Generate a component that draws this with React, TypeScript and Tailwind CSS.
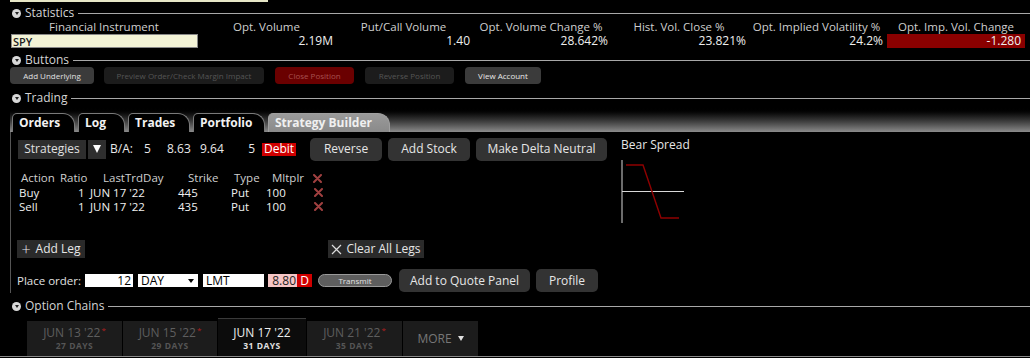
import React from "react";

const Circle = () => (
  <span className="w-[9px] h-[9px] rounded-full bg-[#d8d8d8] flex items-center justify-center shrink-0">
    <span className="w-0 h-0 border-l-[2.5px] border-r-[2.5px] border-t-[3px] border-l-transparent border-r-transparent border-t-[#222] mt-[1px]" />
  </span>
);

const Sec = ({ title, className }: { title: string; className?: string }) => (
  <div className={"flex items-center pl-[12px] " + (className || "")}>
    <Circle />
    <span className="ml-[4px] text-[12px] text-[#d4d4d4] leading-none">{title}</span>
    <div className="flex-1 h-px bg-[#a8a8a8] ml-[4px]" />
  </div>
);

const XMark = () => (
  <svg width="9" height="9" viewBox="0 0 9 9" className="block">
    <path d="M1 1 L8 8 M8 1 L1 8" stroke="#a04040" strokeWidth="2" strokeLinecap="round" />
  </svg>
);

const Btn = ({ children, className }: { children: React.ReactNode; className: string }) => (
  <div className={"flex items-center justify-center rounded-[4px] text-[8px] leading-none " + className}>{children}</div>
);

const GBtn = ({ children, className }: { children: React.ReactNode; className: string }) => (
  <div className={"flex items-center justify-center rounded-[5px] bg-[#333] text-[12px] text-[#e6e6e6] leading-none " + className}>{children}</div>
);

const statCols = [
  { h: "Opt. Volume", v: "2.19M", w: "w-[137px]" },
  { h: "Put/Call Volume", v: "1.40", w: "w-[137px]" },
  { h: "Opt. Volume Change %", v: "28.642%", w: "w-[138px]" },
  { h: "Hist. Vol. Close %", v: "23.821%", w: "w-[138px]" },
  { h: "Opt. Implied Volatility %", v: "24.2%", w: "w-[137px]" },
];

const Tab = ({ label, w, active }: { label: string; w: string; active?: boolean }) => (
  <div
    className={
      "h-[19px] flex items-center pl-[6px] text-[12px] font-bold leading-none rounded-tl-[5px] rounded-tr-[12px] border border-b-0 " +
      w +
      (active
        ? " bg-gradient-to-b from-[#9a9a9a] to-[#8a8a8a] text-[#f0f0f0] border-[#a0a0a0]"
        : " bg-black text-[#f2f2f2] border-[#7a7a7a]")
    }
  >
    {label}
  </div>
);

const Exp = ({ d, days, w, active }: { d: string; days: string; w: string; active?: boolean }) => (
  <div
    className={
      "flex flex-col items-center " +
      w +
      (active ? " h-[38px] bg-[#0c0c0c] border-t border-[#3a3a3a] pt-[7px]" : " h-[35px] bg-[#1c1c1c] pt-[5px]")
    }
  >
    <div className={"text-[12px] leading-[14px] flex " + (active ? "text-[#eeeeee]" : "text-[#5e5e5e]")}>
      <span>{d}</span>
      {!active && <span className="text-[#b02020] text-[8px] leading-[8px] ml-[1px]">*</span>}
    </div>
    <div className={"text-[8.5px] font-bold tracking-[0.5px] leading-[12px] " + (active ? "text-[#e0e0e0]" : "text-[#555]")}>
      {days}
    </div>
  </div>
);

export default function App() {
  return (
    <div className="w-[1030px] h-[358px] bg-black overflow-hidden font-['Open_Sans',sans-serif] text-[#e8e8e8] relative">
      {/* top strip */}
      <div className="ml-[10px] w-[258px] h-[2px] bg-[#e6e6c6]" />
      <Sec title="Statistics" className="h-[16px] mt-[3px]" />
      {/* stats headers */}
      <div className="flex pl-[10px] h-[12px] items-center text-[11.5px] text-[#cfcfcf] leading-none">
        <div className="w-[188px] text-center">Financial Instrument</div>
        {statCols.map((c) => (
          <div key={c.h} className={c.w + " text-center"}>{c.h}</div>
        ))}
        <div className="w-[138px] ml-[2px] text-center">Opt. Imp. Vol. Change</div>
      </div>
      <div className="flex pl-[11px] h-[14px] mt-[1px] text-[12px] leading-none">
        <div className="w-[187px] bg-[#f3f3d6] border border-[#888] text-[#222] flex items-center pl-[1px] text-[11px] font-semibold">SPY</div>
        {statCols.map((c) => (
          <div key={c.h} className={c.w + " text-right pr-[2px] flex items-center justify-end text-[#eeeeee]"}>{c.v}</div>
        ))}
        <div className="w-[138px] ml-[2px] bg-[#8a0000] flex items-center justify-end pr-[4px] text-[#f0f0f0]">-1.280</div>
      </div>
      <Sec title="Buttons" className="h-[14px] mt-[5px]" />
      <div className="flex h-[17px] pl-[10px]">
        <Btn className="w-[84px] bg-[#3b3b3b] text-[#e0e0e0]">Add Underlying</Btn>
        <Btn className="w-[160px] ml-[10px] bg-[#1c1c1c] text-[#555]">Preview Order/Check Margin Impact</Btn>
        <Btn className="w-[79px] ml-[11px] bg-[#6a0000] text-[#a85050]">Close Position</Btn>
        <Btn className="w-[89px] ml-[11px] bg-[#1c1c1c] text-[#555]">Reverse Position</Btn>
        <Btn className="w-[76px] ml-[11px] bg-[#3b3b3b] text-[#e8e8e8]">View Account</Btn>
      </div>
      <Sec title="Trading" className="h-[10px] mt-[9px]" />
      {/* tab bar */}
      <div className="ml-[10px] h-[29px] bg-gradient-to-b from-black from-15% to-[#8c8c8c] flex items-end pl-[2px] gap-[3px]">
        <Tab label="Orders" w="w-[63px]" />
        <Tab label="Log" w="w-[47px]" />
        <Tab label="Trades" w="w-[62px]" />
        <Tab label="Portfolio" w="w-[72px]" />
        <Tab label="Strategy Builder" w="w-[122px]" active />
      </div>
      {/* content */}
      <div className="ml-[10px] h-[161px] border-l border-[#555] flex">
        <div className="w-[610px] flex flex-col">
          {/* row 1 */}
          <div className="flex items-center h-[24px] mt-[5px] text-[12px] leading-none">
            <div className="ml-[7px] w-[68px] h-[19px] bg-[#2e2e2e] flex items-center justify-center text-[#e0e0e0]">Strategies</div>
            <div className="ml-[2px] w-[18px] h-[19px] bg-[#2e2e2e] flex items-center justify-center">
              <span className="w-0 h-0 border-l-[4px] border-r-[4px] border-t-[8px] border-l-transparent border-r-transparent border-t-white" />
            </div>
            <span className="ml-[4px] w-[34px]">B/A:</span>
            <span className="w-[23px]">5</span>
            <span className="w-[33px]">8.63</span>
            <span className="w-[24px]">9.64</span>
            <span className="w-[31px] text-right">5</span>
            <div className="ml-[7px] w-[34px] h-[13px] bg-[#d00000] flex items-center justify-center text-white">Debit</div>
            <GBtn className="ml-[14px] w-[72px] h-[23px]">Reverse</GBtn>
            <GBtn className="ml-[6px] w-[82px] h-[23px]">Add Stock</GBtn>
            <GBtn className="ml-[6px] w-[131px] h-[23px]">Make Delta Neutral</GBtn>
          </div>
          {/* legs table */}
          <div className="mt-[10px] text-[11.5px] leading-none">
            <div className="flex items-center h-[14px] text-[#cfcfcf]">
              <span className="ml-[10px] w-[39px]">Action</span>
              <span className="w-[43px]">Ratio</span>
              <span className="w-[85px]">LastTrdDay</span>
              <span className="w-[46px]">Strike</span>
              <span className="w-[38px]">Type</span>
              <span className="w-[41px]">Mltplr</span>
              <XMark />
            </div>
            {["Buy", "Sell"].map((a, i) => (
              <div key={a} className="flex items-center h-[14.5px] text-[#f0f0f0]">
                <span className="ml-[8px] w-[59px]">{a}</span>
                <span className="w-[12px]">1</span>
                <span className="w-[88px]">JUN 17 '22</span>
                <span className="w-[53px]">{i === 0 ? "445" : "435"}</span>
                <span className="w-[35px]">Put</span>
                <span className="w-[48px]">100</span>
                <XMark />
              </div>
            ))}
          </div>
          {/* add leg row */}
          <div className="flex h-[18px] mt-[26px] text-[12px] leading-none">
            <div className="ml-[6px] w-[68px] bg-[#2a2a2a] flex items-center justify-center gap-[5px] text-[#e6e6e6]">
              <span className="text-[16px] leading-none font-light">+</span>
              <span>Add Leg</span>
            </div>
            <div className="ml-[243px] w-[96px] bg-[#2a2a2a] flex items-center justify-center gap-[4px] text-[#e6e6e6]">
              <svg width="11" height="11" viewBox="0 0 11 11"><path d="M1 1 L10 10 M10 1 L1 10" stroke="#ddd" strokeWidth="1.2" /></svg>
              <span>Clear All Legs</span>
            </div>
          </div>
          {/* place order */}
          <div className="flex items-center h-[23px] mt-[11px] text-[12px] leading-none">
            <span className="ml-[6px] w-[68px] text-[11.5px] text-[#e0e0e0]">Place order:</span>
            <div className="w-[48px] h-[13px] bg-white text-black flex items-center justify-end pr-[2px]">12</div>
            <div className="ml-[5px] w-[60px] h-[13px] bg-white text-black flex items-center pl-[3px] justify-between pr-[4px]">
              <span>DAY</span>
              <span className="w-0 h-0 border-l-[3px] border-r-[3px] border-t-[4px] border-l-transparent border-r-transparent border-t-black" />
            </div>
            <div className="ml-[5px] w-[61px] h-[13px] bg-white text-black flex items-center pl-[3px]">LMT</div>
            <div className="ml-[4px] w-[29px] h-[13px] bg-[#f6c6c6] text-[#222] flex items-center justify-end pr-[1px]">8.80</div>
            <div className="w-[15px] h-[13px] bg-[#d00000] text-white flex items-center justify-center">D</div>
            <div className="ml-[6px] w-[74px] h-[13px] rounded-full bg-[#5e5e5e] border border-[#9a9a9a] flex items-center justify-center text-[8px] text-[#e0e0e0]">Transmit</div>
            <GBtn className="ml-[7px] w-[131px] h-[23px]">Add to Quote Panel</GBtn>
            <GBtn className="ml-[6px] w-[62px] h-[23px]">Profile</GBtn>
          </div>
        </div>
        {/* chart */}
        <div className="flex flex-col">
          <div className="mt-[6px] h-[14px] text-[12px] leading-none text-[#e6e6e6] flex items-center">Bear Spread</div>
          <svg width="70" height="66" viewBox="0 0 70 66" className="mt-[7px] -ml-[1px] block">
            <line x1="2" y1="1" x2="2" y2="64" stroke="#d8d8d8" strokeWidth="1" />
            <line x1="2" y1="32.5" x2="64" y2="32.5" stroke="#d8d8d8" strokeWidth="1" />
            <polyline points="6,6 23,6 41,59 59,59" fill="none" stroke="#8f0000" strokeWidth="1.4" />
          </svg>
        </div>
      </div>
      <Sec title="Option Chains" className="h-[14px] mt-[6px]" />
      <div className="flex items-end h-[38px] mt-[5px] pl-[27px] gap-[1px]">
        <Exp d="JUN 13 '22" days="27 DAYS" w="w-[95px]" />
        <Exp d="JUN 15 '22" days="29 DAYS" w="w-[94px]" />
        <Exp d="JUN 17 '22" days="31 DAYS" w="w-[88px]" active />
        <Exp d="JUN 21 '22" days="35 DAYS" w="w-[95px]" />
        <div className="w-[75px] h-[35px] bg-[#1c1c1c] flex items-center justify-center gap-[6px] text-[12px] text-[#777]">
          <span>MORE</span>
          <span className="w-0 h-0 border-l-[3.5px] border-r-[3.5px] border-t-[5px] border-l-transparent border-r-transparent border-t-[#e0e0e0]" />
        </div>
      </div>
      <div className="h-px bg-[#8a8a8a]" />
    </div>
  );
}
